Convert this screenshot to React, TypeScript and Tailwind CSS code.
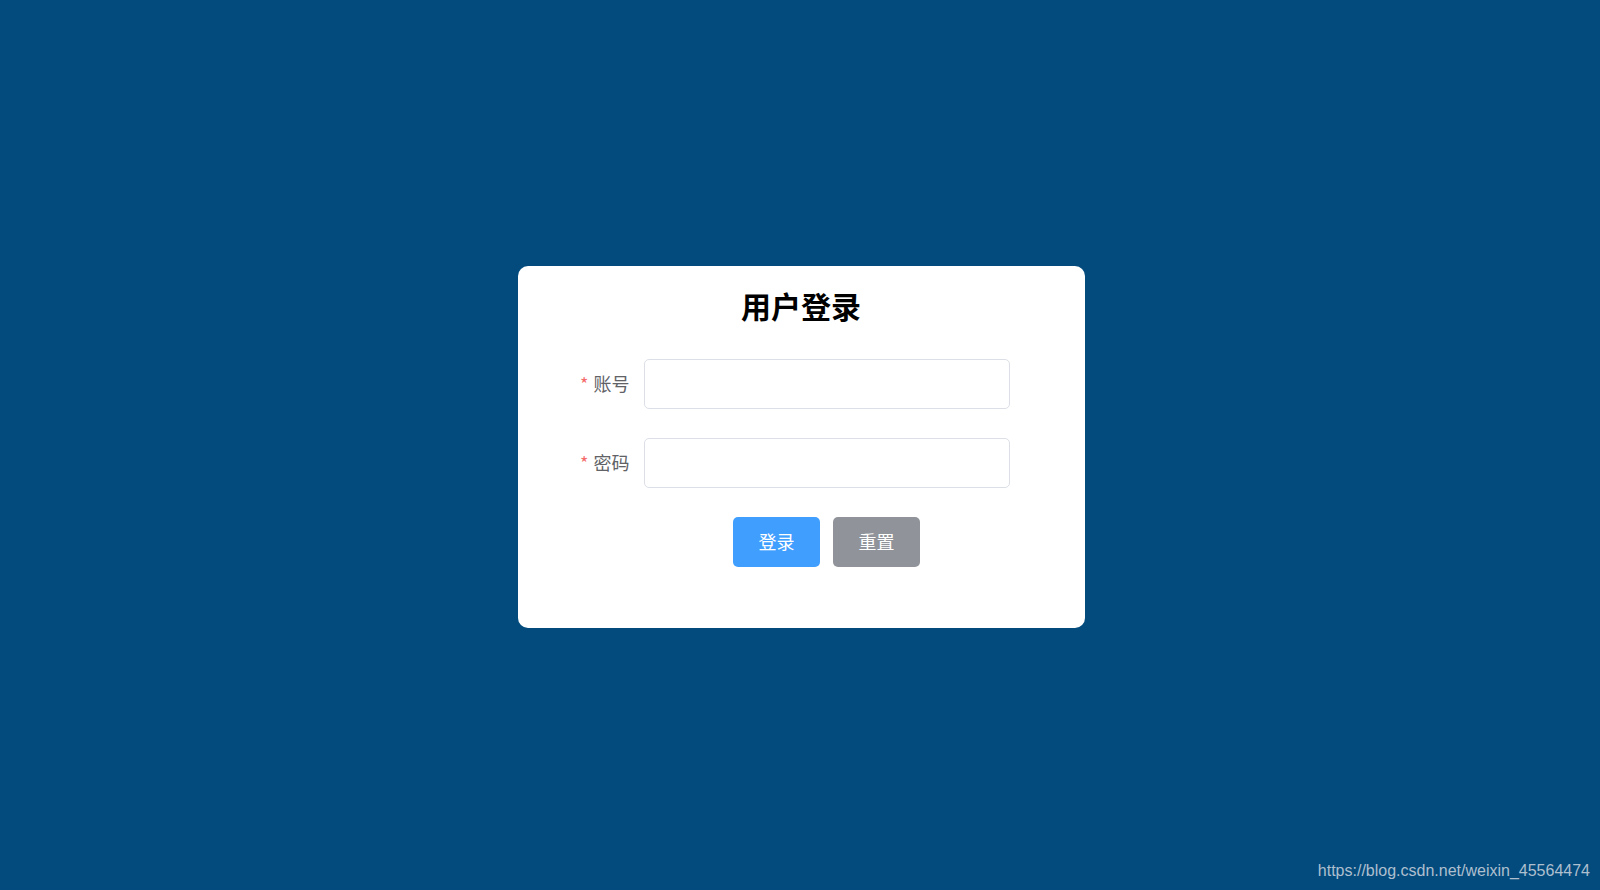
import { useState } from "react";

const cjk = "font-['Microsoft_YaHei','Noto_Sans_CJK_SC',sans-serif]";

export default function App() {
    const [account, setAccount] = useState("");
    const [password, setPassword] = useState("");

    const reset = () => {
        setAccount("");
        setPassword("");
    };

    return (
        <div className={`relative min-h-[890px] w-full bg-[#034b7c] pt-[3px] pl-[2px] flex items-center justify-center ${cjk}`}>

            {/* LOGIN CARD */}
            <div className="w-[567px] bg-white rounded-[10px] pt-[19px] pb-[61px] flex flex-col">
                <h3 className="h-[40px] leading-[40px] text-center text-[30px] font-bold text-black">
                    用户登录
                </h3>

                <div className="mt-[34px] flex flex-col gap-[29px]">
                    {/* Account */}
                    <div className="flex items-center">
                        <label className="w-[126px] pr-[14px] text-right text-[18px] text-[#606266]">
                            <span className="text-[#f56c6c] mr-[5px]">*</span>账号
                        </label>
                        <input
                            value={account}
                            onChange={(e) => setAccount(e.target.value)}
                            className="w-[366px] h-[50px] border border-[#dcdfe6] rounded-[5px] px-[19px] text-[18px] text-[#606266] outline-none focus:border-[#409eff]"
                        />
                    </div>

                    {/* Password */}
                    <div className="flex items-center">
                        <label className="w-[126px] pr-[14px] text-right text-[18px] text-[#606266]">
                            <span className="text-[#f56c6c] mr-[5px]">*</span>密码
                        </label>
                        <input
                            type="password"
                            value={password}
                            onChange={(e) => setPassword(e.target.value)}
                            className="w-[366px] h-[50px] border border-[#dcdfe6] rounded-[5px] px-[19px] text-[18px] text-[#606266] outline-none focus:border-[#409eff]"
                        />
                    </div>

                    {/* Buttons */}
                    <div className="ml-[126px] w-[366px] flex justify-center gap-[13px]">
                        <button className="w-[87px] h-[50px] rounded-[5px] bg-[#409eff] text-white text-[18px] hover:bg-[#66b1ff]">
                            登录
                        </button>
                        <button
                            onClick={reset}
                            className="w-[87px] h-[50px] rounded-[5px] bg-[#909399] text-white text-[18px] hover:bg-[#a6a9ad]"
                        >
                            重置
                        </button>
                    </div>
                </div>
            </div>

            {/* Watermark */}
            <div className="absolute right-[10px] bottom-[7px] text-[16px] leading-[24px] text-[#aebfcf] font-['Liberation_Sans',Arial,sans-serif]">
                https://blog.csdn.net/weixin_45564474
            </div>
        </div>
    );
}
